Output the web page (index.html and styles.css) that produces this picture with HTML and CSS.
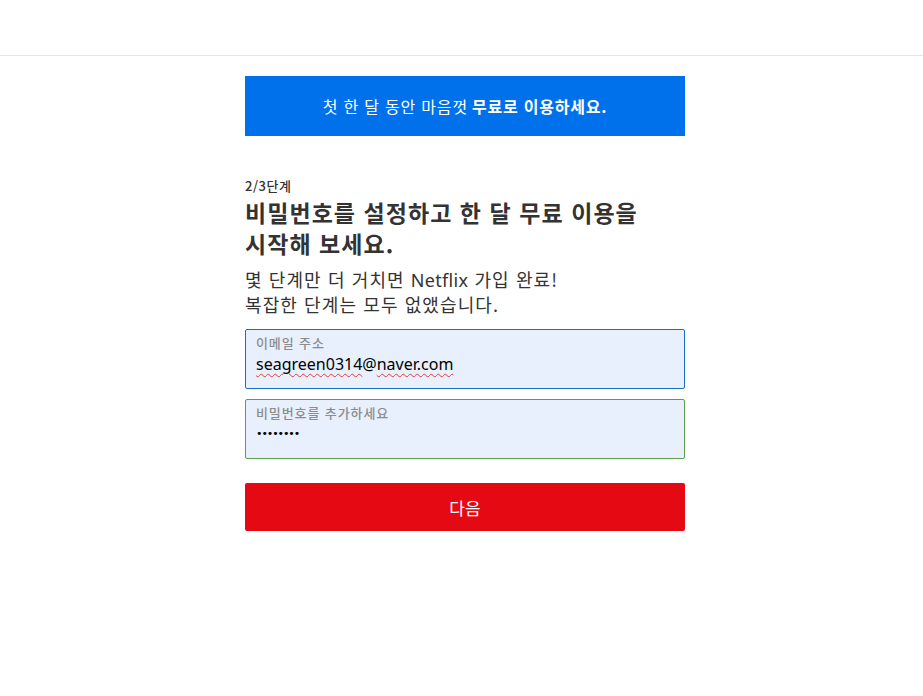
FILE: index.html
```html
<!DOCTYPE html>
<html lang="ko">
<head>
<meta charset="utf-8">
<link rel="stylesheet" href="styles.css">
</head>
<body>
<header class="header"></header>
<main class="wrap">
  <div class="content">
    <div class="banner">첫 한 달 동안 마음껏 <b>무료로 이용하세요.</b></div>
    <div class="step">2/3단계</div>
    <h1 class="title">비밀번호를 설정하고 한 달 무료 이용을<br>시작해 보세요.</h1>
    <p class="desc">몇 단계만 더 거치면 <span class="latin">Netflix</span> 가입 완료!<br>복잡한 단계는 모두 없앴습니다.</p>
    <div class="field field-email">
      <div class="label">이메일 주소</div>
      <div class="value"><span class="spell">seagreen0314</span>@<span class="spell">naver.com</span></div>
    </div>
    <div class="field field-pw">
      <div class="label">비밀번호를 추가하세요</div>
      <div class="value dots">••••••••</div>
    </div>
    <button class="next">다음</button>
  </div>
</main>
</body>
</html>
```
FILE: styles.css
```css
html, body { margin: 0; padding: 0; background: #fff; }
body { font-family: "Noto Sans CJK KR", "Noto Sans", sans-serif; color: #333; }
.header { height: 55px; border-bottom: 1px solid #e6e6e6; }
.wrap { width: 447px; margin: 0 auto; padding-left: 7px; box-sizing: border-box; }
.content { width: 440px; padding-top: 20px; }
.banner {
  height: 60px; background: #0071eb; color: #fff;
  display: flex; align-items: center; justify-content: center;
  font-size: 16px; letter-spacing: 0.8px;
}
.banner b { font-weight: 700; margin-left: 4px; }
.step { margin-top: 41px; font-size: 13px; font-weight: 500; color: #333; line-height: 18px; letter-spacing: 0.5px; }
.title { margin: 2px 0 0; font-size: 23px; font-weight: 700; line-height: 31px; color: #333; letter-spacing: 1.05px; }
.desc { margin: 8px 0 0; font-size: 18px; line-height: 25px; font-weight: 400; color: #333; letter-spacing: 1.1px; }
.desc .latin { font-family: "Noto Sans", sans-serif; letter-spacing: 0.3px; line-height: 1; }
.field {
  height: 60px; box-sizing: border-box; background: #e8f0fe;
  border: 1px solid #1a6fc4; border-radius: 2px; padding: 5px 10px 0;
}
.field-email { margin-top: 12px; }
.field-pw { margin-top: 10px; border-color: #5d9e4c; }
.label { font-size: 13px; color: #8c8c8c; font-weight: 500; line-height: 16px; letter-spacing: 0.9px; }
.value { font-family: "Noto Sans", sans-serif; font-size: 16px; color: #000; line-height: 24px; margin-top: 1px; }
.spell { text-decoration: underline wavy #e03a3a; text-decoration-thickness: 1px; text-underline-offset: 3px; }
.dots { font-family: "DejaVu Sans", sans-serif; font-size: 11px; letter-spacing: -1.1px; line-height: 18px; margin-top: 4px; }
.next {
  display: block; width: 100%; height: 48px; margin-top: 24px;
  background: #e50914; color: #fff; border: 0; border-radius: 2px;
  font-family: "Noto Sans CJK KR", sans-serif; font-size: 17px; cursor: pointer;
}
```
